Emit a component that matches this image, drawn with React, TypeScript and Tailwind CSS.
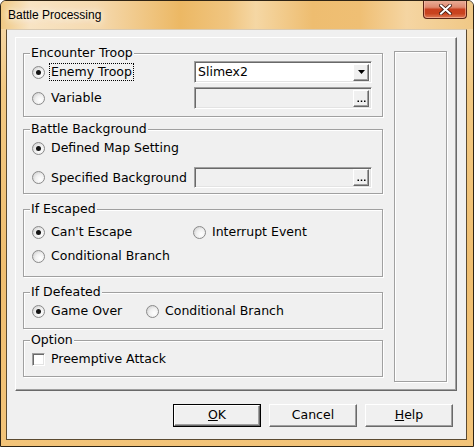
import type { ReactNode } from 'react';

// Small classic Win32 controls used by the dialog

const Radio = ({ checked }: { checked?: boolean }) => (
    <span className="w-[13px] h-[13px] shrink-0 rounded-full border border-[#8a8a8a] bg-[radial-gradient(circle_at_65%_65%,#ffffff_0%,#f0f0f0_45%,#c6c6c6_100%)] flex items-center justify-center">
        {checked && <span className="w-[5px] h-[5px] rounded-full bg-[#151515]" />}
    </span>
);

const RadioItem = ({ checked, focused, children }: { checked?: boolean; focused?: boolean; children: ReactNode }) => (
    <div className="flex items-center gap-[5px]">
        <Radio checked={checked} />
        <span className={focused ? 'px-[1px] outline outline-1 outline-dotted outline-black leading-[16px]' : 'px-[1px] leading-[16px]'}>
            {children}
        </span>
    </div>
);

const SunkenField = ({ white, children }: { white?: boolean; children?: ReactNode }) => (
    <div
        className={`flex items-center border border-t-[#a0a0a0] border-l-[#a0a0a0] border-r-white border-b-white shadow-[inset_1px_1px_0_#696969,inset_-1px_-1px_0_#e3e3e3] ${white ? 'bg-white' : 'bg-[#f0f0f0]'} w-[178px] h-full`}
    >
        {children}
    </div>
);

const SmallButton = ({ children }: { children: ReactNode }) => (
    <div className="ml-auto mr-[2px] w-[16px] h-[17px] bg-[#f0f0f0] border border-t-white border-l-white border-r-[#696969] border-b-[#696969] shadow-[inset_-1px_-1px_0_#a0a0a0] flex items-center justify-center">
        {children}
    </div>
);

const Dots = () => (
    <svg width="9" height="9" viewBox="0 0 9 9" className="mt-[2px]">
        <rect x="0.5" y="5.5" width="1.5" height="1.5" fill="#000" />
        <rect x="3.75" y="5.5" width="1.5" height="1.5" fill="#000" />
        <rect x="7" y="5.5" width="1.5" height="1.5" fill="#000" />
    </svg>
);

const Group = ({ title, className, children }: { title: string; className: string; children: ReactNode }) => (
    <div className={`relative w-[360px] border border-[#a0a0a0] shadow-[inset_1px_1px_0_#ffffff,1px_1px_0_#ffffff] ${className}`}>
        {/* legend sits over the top border */}
        <span className="absolute -top-[8px] left-[6px] px-[1px] bg-[#f0f0f0] leading-[14px]">{title}</span>
        {children}
    </div>
);

const DialogButton = ({ children, primary }: { children: ReactNode; primary?: boolean }) => (
    <div className={`w-[88px] h-[23px] ${primary ? 'border border-black' : ''}`}>
        <div className="w-full h-full bg-[#f0f0f0] border border-t-white border-l-white border-r-[#696969] border-b-[#696969] shadow-[inset_-1px_-1px_0_#a0a0a0] flex items-center justify-center leading-none">
            {children}
        </div>
    </div>
);

const App = () => {
    return (
        <div className="w-[474px] h-[447px] flex flex-col border border-[#2f2414] rounded-t-[6px] overflow-hidden bg-[linear-gradient(180deg,#f6dcb0_0%,#f2c983_20%,#efbe70_60%,#f3c479_100%)] font-['DejaVu_Sans',sans-serif] text-[12.5px] text-black">
            {/* Title bar */}
            <div className="h-[28px] shrink-0 flex items-start pl-[7px] pr-[6px] bg-[linear-gradient(90deg,#f0c983_0%,#f8e4c4_6%,#f5dab0_20%,#ecb864_38%,#f0c580_48%,#f5d7a4_54%,#eebd70_66%,#efbf74_76%,#f5d5a2_86%,#f0c886_100%)]">
                <span className="mt-[7px] font-['Liberation_Sans',sans-serif] text-[12px] leading-[14px] text-black [text-shadow:0_0_6px_#fff8ee,0_0_10px_#fff8ee]">
                    Battle Processing
                </span>
                <div className="ml-auto w-[44px] h-[19px] -mt-[1px] rounded-b-[4px] border border-t-0 border-[#5a2416] bg-[linear-gradient(180deg,#eab19c_0%,#df8a70_40%,#c9401f_52%,#c8431f_75%,#e07a55_100%)] shadow-[inset_0_0_0_1px_rgba(255,210,190,0.5)] flex items-center justify-center">
                    <svg width="13" height="11" viewBox="0 0 13 11">
                        <path d="M2 1.5 L11 9.5 M11 1.5 L2 9.5" stroke="#3b170d" strokeWidth="3.6" strokeLinecap="square" />
                        <path d="M2 1.5 L11 9.5 M11 1.5 L2 9.5" stroke="#ffffff" strokeWidth="2" strokeLinecap="square" />
                    </svg>
                </div>
            </div>

            {/* Frame body */}
            <div className="flex-1 flex pl-[5px] pr-[6px] pb-[6px]">
                <div className="flex-1 flex flex-col bg-[#f0f0f0] border border-[#5b4a31] border-t-[#d9cab2]">
                    {/* Main panel */}
                    <div className="mt-[7px] ml-[8px] w-[442px] h-[354px] flex border border-t-white border-l-white border-r-[#696969] border-b-[#696969] shadow-[inset_-1px_-1px_0_#a0a0a0]">
                        <div className="pl-[7px] pt-[15px] flex flex-col">
                            <Group title="Encounter Troop" className="h-[64px] pt-[7px] flex flex-col gap-[4px]">
                                <div className="h-[22px] flex items-center pl-[8px]">
                                    <div className="w-[162px]">
                                        <RadioItem checked focused>Enemy Troop</RadioItem>
                                    </div>
                                    <SunkenField white>
                                        <span className="pl-[3px]">Slimex2</span>
                                        <SmallButton>
                                            <svg width="7" height="4" viewBox="0 0 7 4">
                                                <path d="M0 0 H7 L3.5 4 Z" fill="#000" />
                                            </svg>
                                        </SmallButton>
                                    </SunkenField>
                                </div>
                                <div className="h-[22px] flex items-center pl-[8px]">
                                    <div className="w-[162px]">
                                        <RadioItem>Variable</RadioItem>
                                    </div>
                                    <SunkenField>
                                        <SmallButton>
                                            <Dots />
                                        </SmallButton>
                                    </SunkenField>
                                </div>
                            </Group>

                            <Group title="Battle Background" className="mt-[12px] h-[65px] pt-[8px] flex flex-col gap-[9px]">
                                <div className="h-[20px] flex items-center pl-[8px]">
                                    <RadioItem checked>Defined Map Setting</RadioItem>
                                </div>
                                <div className="h-[21px] flex items-center pl-[8px]">
                                    <div className="w-[162px]">
                                        <RadioItem>Specified Background</RadioItem>
                                    </div>
                                    <SunkenField>
                                        <SmallButton>
                                            <Dots />
                                        </SmallButton>
                                    </SunkenField>
                                </div>
                            </Group>

                            <Group title="If Escaped" className="mt-[15px] h-[68px] pt-[12px] pl-[8px] grid grid-cols-[161px_auto] auto-rows-[20px] gap-y-[4px]">
                                <div className="flex items-center">
                                    <RadioItem checked>Can't Escape</RadioItem>
                                </div>
                                <div className="flex items-center">
                                    <RadioItem>Interrupt Event</RadioItem>
                                </div>
                                <div className="flex items-center">
                                    <RadioItem>Conditional Branch</RadioItem>
                                </div>
                            </Group>

                            <Group title="If Defeated" className="mt-[15px] h-[37px] pt-[8px] pl-[8px] flex">
                                <div className="w-[114px] h-[20px] flex items-center">
                                    <RadioItem checked>Game Over</RadioItem>
                                </div>
                                <div className="h-[20px] flex items-center">
                                    <RadioItem>Conditional Branch</RadioItem>
                                </div>
                            </Group>

                            <Group title="Option" className="mt-[11px] h-[37px] pt-[8px] pl-[8px]">
                                <div className="h-[20px] flex items-center gap-[6px]">
                                    <span className="w-[13px] h-[13px] bg-white border border-t-[#a0a0a0] border-l-[#a0a0a0] border-r-white border-b-white shadow-[inset_1px_1px_0_#696969,inset_-1px_-1px_0_#e3e3e3]" />
                                    <span>Preemptive Attack</span>
                                </div>
                            </Group>
                        </div>

                        {/* Empty side box */}
                        <div className="ml-[11px] mt-[13px] w-[53px] h-[331px] border border-[#a0a0a0] shadow-[inset_1px_1px_0_#ffffff,1px_1px_0_#ffffff]" />
                    </div>

                    {/* Buttons */}
                    <div className="mt-[13px] pr-[13px] flex justify-end gap-[8px]">
                        <DialogButton primary>
                            <span><span className="underline">O</span>K</span>
                        </DialogButton>
                        <DialogButton>Cancel</DialogButton>
                        <DialogButton>
                            <span><span className="underline">H</span>elp</span>
                        </DialogButton>
                    </div>
                </div>
            </div>
        </div>
    );
};

export default App;
